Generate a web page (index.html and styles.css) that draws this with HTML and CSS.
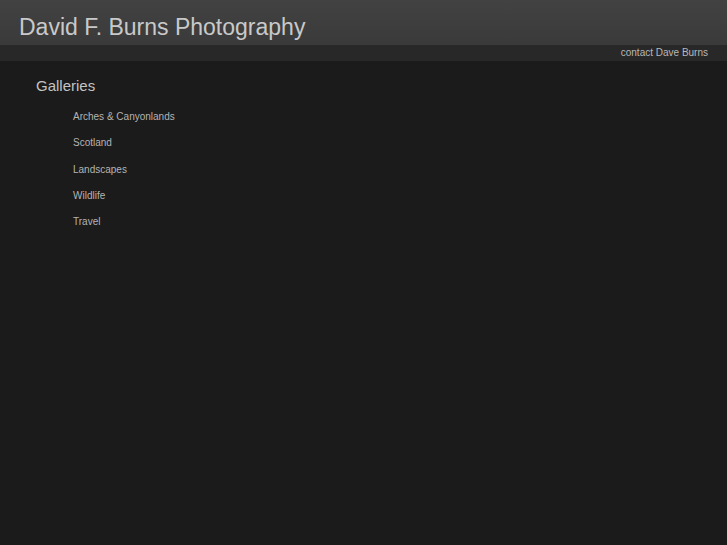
FILE: index.html
```html
<!DOCTYPE html>
<html lang="en">
<head>
  <meta charset="UTF-8" />
  <title>David F. Burns Photography</title>
  <link rel="stylesheet" href="styles.css">
</head>
<body>
  <div class="header">
    <h1 class="site-title">David F. Burns Photography</h1>
  </div>

  <div class="navbar">
    <a href="#" class="nav-link">contact Dave Burns</a>
  </div>

  <div class="content">
    <h2 class="section-title">Galleries</h2>
    <ul class="gallery-list">
      <li><a href="#">Arches &amp; Canyonlands</a></li>
      <li><a href="#">Scotland</a></li>
      <li><a href="#">Landscapes</a></li>
      <li><a href="#">Wildlife</a></li>
      <li><a href="#">Travel</a></li>
    </ul>
  </div>
</body>
</html>
```

FILE: styles.css
```css
body {
  margin: 0;
  font-family: "Liberation Sans", Arial, sans-serif;
  background-color: #1b1b1b;
  color: #c8c8c8;
  height: 100vh;
}

a {
  text-decoration: none;
}

.header {
  height: 45px;
  background: linear-gradient(#424242, #3a3a3a);
  box-sizing: border-box;
  padding: 14px 0 0 19px;
}

.site-title {
  margin: 0;
  font-size: 23px;
  font-weight: normal;
  line-height: 26px;
  color: #c9c9c9;
}

.navbar {
  height: 16px;
  background-color: #282828;
  display: flex;
  justify-content: flex-end;
  align-items: center;
  padding-right: 19px;
}

.nav-link {
  font-size: 10px;
  line-height: 14px;
  margin-top: 0;
  color: #b8b8b8;
}

.content {
  padding: 16px 0 0 36px;
}

.section-title {
  margin: 0;
  font-size: 15px;
  font-weight: normal;
  line-height: 18px;
  color: #c4c4c4;
}

.gallery-list {
  list-style: none;
  margin: 16px 0 0;
  padding: 0 0 0 37px;
}

.gallery-list li {
  height: 26.3px;
  font-size: 10px;
  line-height: 12px;
}

.gallery-list a {
  color: #b4b4b4;
}
```
